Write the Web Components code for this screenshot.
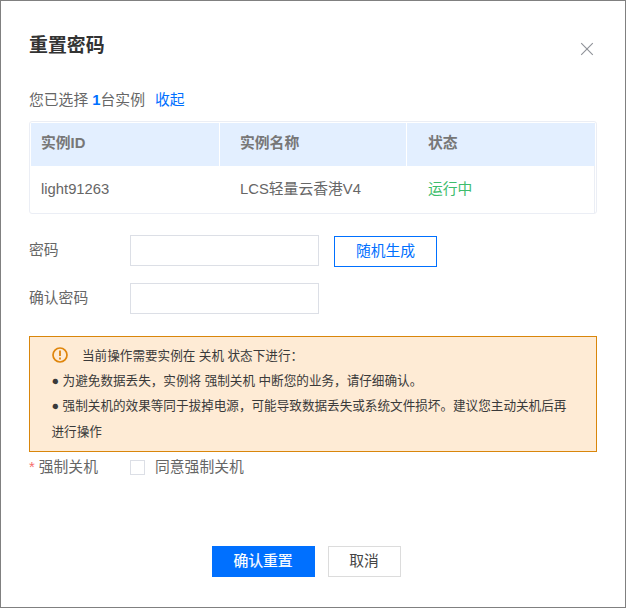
<!DOCTYPE html>
<html lang="zh-CN">
<head>
<meta charset="utf-8">
<title>重置密码</title>
<style>
html,body{margin:0;height:100%}
body{font:14.8px/20px "Liberation Sans","Noto Sans CJK SC",sans-serif;color:#666;background:#fff}
</style>
</head>
<body>
<reset-dialog></reset-dialog>
<script>
function define(name, html) {
  const t = document.createElement('template');
  t.innerHTML = html;
  customElements.define(name, class extends HTMLElement {
    constructor() {
      super();
      this.attachShadow({mode: 'open'}).append(t.content.cloneNode(true));
    }
  });
}

define('dialog-header', `<style>
:host{display:flex;justify-content:space-between;height:61px}
h1{margin:5px 0 0;font-size:18.9px;line-height:24px;font-weight:700;color:#333}
svg{margin:13px 3px 0 0;width:14px;height:14px}
</style><h1><slot></slot></h1>
<svg viewBox="0 0 14 14" fill="none" stroke="#909399" stroke-width="1.15"><path d="M1.2 1.2 12.8 12.8M12.8 1.2 1.2 12.8"/></svg>`);

define('selection-summary', `<style>
:host{display:flex;height:31px;line-height:20px;white-space:pre}
b,a{color:#0070ff}a{margin-left:10px}
</style><span>您已选择 <b>1</b>台实例</span><a>收起</a>`);

define('instance-table', `<style>
:host{display:block;box-sizing:border-box;height:93px;border:1px solid #ebeef5;border-radius:3px;padding:1px 1px 0}
.row{display:grid;grid-template-columns:188px 186px 188px;column-gap:1px}
.head{height:43px;line-height:40px;font-weight:700;color:#777}
.head span{background:#e3efff}
.body{height:47px;line-height:46px;border-right:1px solid #ebeef5}
span{padding-left:21px}
span:first-child{padding-left:10px}
span:nth-child(2){padding-left:20px}
.ok{color:#3dbd6c}
</style>
<div class="row head"><span>实例ID</span><span>实例名称</span><span>状态</span></div>
<div class="row body"><span>light91263</span><span>LCS轻量云香港V4</span><span class="ok">运行中</span></div>`);

define('form-row', `<style>
:host{display:flex;height:48px}
label{width:101px;line-height:30px}
</style><label><slot name="label"></slot></label><slot></slot>`);

define('text-field', `<style>
:host{display:block}
input{display:block;box-sizing:border-box;width:189px;height:31px;border:1px solid #dcdfe6;background:#fff;padding:0 10px;font:inherit;outline:0}
</style><input type="password">`);

define('action-button', `<style>
:host{display:block}
button{display:block;box-sizing:border-box;width:103px;height:31px;padding:0;margin:0;border:1px solid #0070ff;background:#fff;color:#0070ff;font:inherit;line-height:29px}
:host([primary]) button{background:#0070ff;color:#fff;-webkit-text-stroke:.2px #fff}
:host([plain]) button{width:73px;border-color:#dcdcdc;color:#444}
</style><button><slot></slot></button>`);

define('warning-note', `<style>
:host{display:block;box-sizing:border-box;height:116px;border:1px solid #d9860b;background:#feebd5;color:#3a3a3a;padding:7px 22px 0;font-size:12.6px;line-height:25.2px}
p{margin:0;white-space:nowrap}
.first{display:flex}
p+p{position:relative;left:-.5px}
svg{width:16px;height:16px;margin:3px 14px 0 0}
</style>
<p class="first"><svg viewBox="0 0 16 16" fill="none" stroke="#df850b"><circle cx="8" cy="8" r="7" stroke-width="1.7"/><path d="M8 3.5v5.6M8 10.5v2" stroke-width="1.8"/></svg><span>当前操作需要实例在 关机 状态下进行：</span></p>
<p>● 为避免数据丢失，实例将 强制关机 中断您的业务，请仔细确认。</p>
<p>● 强制关机的效果等同于拔掉电源，可能导致数据丢失或系统文件损坏。建议您主动关机后再<br>进行操作</p>`);

define('check-option', `<style>
:host{display:flex;align-items:center;height:29px}
.req{width:101px;display:flex}
em{font-style:normal;color:#f56c6c;margin-right:4px}
.box{box-sizing:border-box;width:15px;height:15px;border:1px solid #dcdfe6;margin:1px 10px 0 0}
</style><span class="req"><em>*</em><slot name="label"></slot></span><span class="box"></span><slot></slot>`);

define('reset-dialog', `<style>
:host{display:flex;flex-direction:column;box-sizing:border-box;width:626px;height:608px;border:1px solid #808080;padding:28px 28px 0;background:#fff}
instance-table{margin-bottom:21px}
.random{margin:1px 0 0 15px}
warning-note{margin-top:5px}
footer{display:flex;justify-content:center;gap:13px;margin-top:65px;padding-right:14px}
</style>
<dialog-header>重置密码</dialog-header>
<selection-summary></selection-summary>
<instance-table></instance-table>
<form-row><span slot="label">密码</span><text-field></text-field><action-button class="random">随机生成</action-button></form-row>
<form-row><span slot="label">确认密码</span><text-field></text-field></form-row>
<warning-note></warning-note>
<check-option><span slot="label">强制关机</span>同意强制关机</check-option>
<footer><action-button primary>确认重置</action-button><action-button plain>取消</action-button></footer>`);
</script>
</body>
</html>
